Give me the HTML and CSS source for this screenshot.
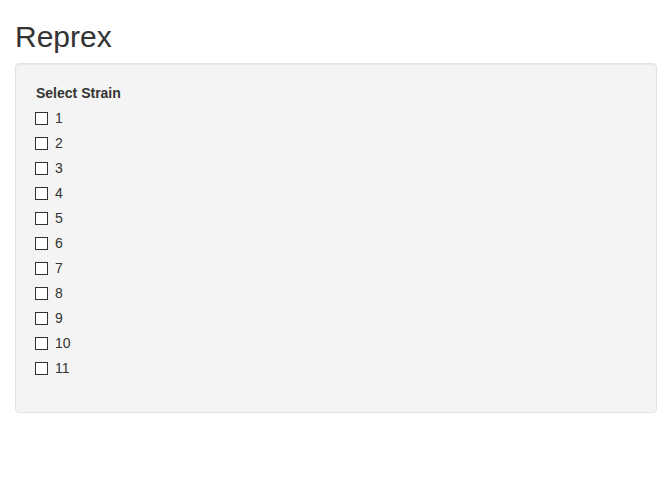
FILE: index.html
```html
<!DOCTYPE html>
<html>
<head>
<meta charset="utf-8">
<title>Reprex</title>
<link rel="stylesheet" href="styles.css">
</head>
<body>
<div class="container">
  <h2 class="title">Reprex</h2>
  <div class="well">
    <div class="form-group">
      <label class="control-label">Select Strain</label>
      <div class="options">
        <label class="check"><input type="checkbox" class="box"><span>1</span></label>
        <label class="check"><input type="checkbox" class="box"><span>2</span></label>
        <label class="check"><input type="checkbox" class="box"><span>3</span></label>
        <label class="check"><input type="checkbox" class="box"><span>4</span></label>
        <label class="check"><input type="checkbox" class="box"><span>5</span></label>
        <label class="check"><input type="checkbox" class="box"><span>6</span></label>
        <label class="check"><input type="checkbox" class="box"><span>7</span></label>
        <label class="check"><input type="checkbox" class="box"><span>8</span></label>
        <label class="check"><input type="checkbox" class="box"><span>9</span></label>
        <label class="check"><input type="checkbox" class="box"><span>10</span></label>
        <label class="check"><input type="checkbox" class="box"><span>11</span></label>
      </div>
    </div>
  </div>
</div>
</body>
</html>
```
FILE: styles.css
```css
html, body {
  margin: 0;
  padding: 0;
  background: #fff;
}
body {
  font-family: "Liberation Sans", Arial, sans-serif;
  font-size: 14px;
  line-height: 20px;
  color: #333;
}
.container {
  padding: 0 15px;
}
.title {
  margin: 20px 0 10px;
  font-size: 30px;
  line-height: 33px;
  font-weight: 500;
}
.well {
  background: #f4f4f4;
  border: 1px solid #e3e3e3;
  border-radius: 4px;
  box-shadow: inset 0 1px 1px rgba(0,0,0,.05);
  padding: 19px 19px 19px 19px;
  margin-bottom: 20px;
}
.form-group {
  display: flex;
  flex-direction: column;
  padding-bottom: 15px;
}
.control-label {
  font-weight: bold;
  margin-bottom: 5px;
  padding-left: 1px;
}
.options {
  display: flex;
  flex-direction: column;
  gap: 5px;
}
.check {
  display: flex;
  align-items: flex-start;
  min-height: 20px;
  font-weight: normal;
}
.box {
  -webkit-appearance: none;
  appearance: none;
  width: 13px;
  height: 13px;
  margin: 4px 7px 0 0;
  border: 1px solid #333;
  background: #fff;
  border-radius: 0;
  flex: none;
}
```
